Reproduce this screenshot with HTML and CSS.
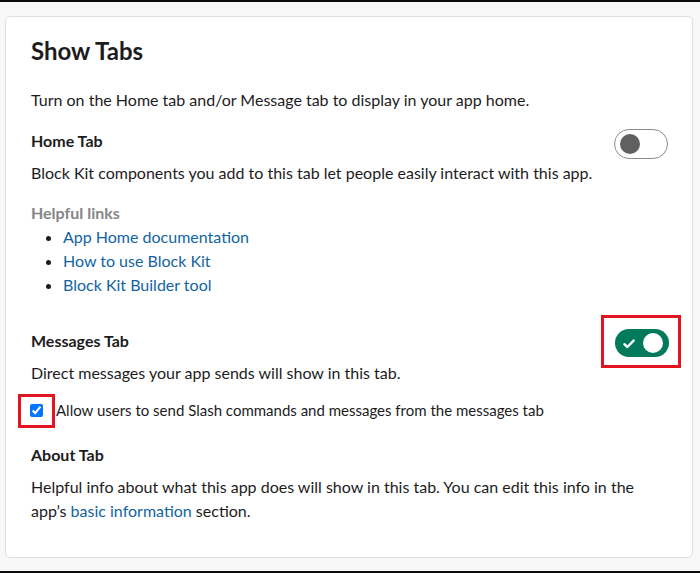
FILE: index.html
```html
<!DOCTYPE html>
<html lang="en">
<head>
<meta charset="utf-8">
<title>Show Tabs</title>
<link rel="stylesheet" href="styles.css">
</head>
<body>
<div class="edge"></div>
<main class="page">
  <section class="card">
    <h1 class="title">Show Tabs</h1>
    <p class="intro">Turn on the Home tab and/or Message tab to display in your app home.</p>

    <div class="section home">
      <div class="section-head">
        <h2 class="section-title">Home Tab</h2>
        <span class="toggle toggle-off"><span class="knob"></span></span>
      </div>
      <p class="desc">Block Kit components you add to this tab let people easily interact with this app.</p>
      <h3 class="links-title">Helpful links</h3>
      <ul class="links">
        <li><a href="#">App Home documentation</a></li>
        <li><a href="#">How to use Block Kit</a></li>
        <li><a href="#">Block Kit Builder tool</a></li>
      </ul>
    </div>

    <div class="section messages">
      <div class="section-head">
        <h2 class="section-title">Messages Tab</h2>
        <span class="toggle toggle-on">
          <svg class="check" width="12" height="10" viewBox="0 0 12 10" aria-hidden="true"><path d="M1.4 5.2 L4.4 8 L10.6 1.6" fill="none" stroke="#fff" stroke-width="2.4" stroke-linecap="round" stroke-linejoin="round"/></svg>
          <span class="knob"></span>
          <span class="mark mark-toggle"></span>
        </span>
      </div>
      <p class="desc">Direct messages your app sends will show in this tab.</p>
      <label class="check-row">
        <span class="check-wrap"><input type="checkbox" checked><span class="mark mark-check"></span></span>
        <span>Allow users to send Slash commands and messages from the messages tab</span>
      </label>
    </div>

    <div class="section about">
      <div class="section-head">
        <h2 class="section-title">About Tab</h2>
      </div>
      <p class="desc">Helpful info about what this app does will show in this tab. You can edit this info in the app’s <a href="#">basic information</a> section.</p>
    </div>
  </section>
</main>
<div class="edge"></div>
</body>
</html>
```

FILE: styles.css
```css
* { box-sizing: border-box; }

html, body {
  margin: 0;
  padding: 0;
}

body {
  width: 700px;
  height: 573px;
  background: #f8f8f8;
  font-family: Lato, "Open Sans", "Liberation Sans", sans-serif;
  font-size: 16px;
  line-height: 24px;
  color: #1d1c1d;
  overflow: hidden;
}

.edge {
  height: 2px;
  background: #0b0b0b;
}

.page {
  padding: 14px 7px 13px 5px;
}

.card {
  background: #fff;
  border: 1px solid #dedede;
  border-radius: 5px;
  padding: 18px 24px 34px 25px;
}

.title {
  margin: 0;
  font-size: 24px;
  line-height: 32px;
  font-weight: 700;
}

.intro {
  margin: 21px 0 0;
}

.section-head {
  display: flex;
  justify-content: space-between;
  align-items: flex-start;
  height: 32px;
}

.section-title {
  margin: 0;
  font-size: 16px;
  line-height: 24px;
  font-weight: 700;
}

.desc {
  margin: 0;
}

.home { margin-top: 17px; }
.messages { margin-top: 32px; }
.about { margin-top: 21px; }

.links-title {
  margin: 16px 0 0;
  font-size: 16px;
  line-height: 24px;
  font-weight: 700;
  color: #868686;
}

.links {
  margin: 0;
  padding-left: 32px;
  list-style: disc;
}

a {
  color: #1264a3;
  text-decoration: none;
}

.toggle {
  position: relative;
  display: flex;
  align-items: center;
  width: 54px;
  border-radius: 15px;
}

.toggle-off {
  height: 30px;
  border: 1px solid #8a8a8a;
  padding: 0 5px;
  background: #fff;
}

.toggle-off .knob {
  width: 20px;
  height: 20px;
  border-radius: 50%;
  background: #616061;
}

.toggle-on {
  height: 28px;
  margin-right: -1px;
  background: #007a5a;
  justify-content: space-between;
  padding: 0 6px 0 8px;
}

.toggle-on .knob {
  width: 20px;
  height: 20px;
  border-radius: 50%;
  background: #fff;
}

.check {
  display: block;
  margin-top: 1px;
}

.check-row {
  display: flex;
  align-items: center;
  gap: 13px;
  margin-top: 13px;
  font-size: 15px;
}

.check-wrap {
  position: relative;
  display: flex;
  margin-left: -1px;
}

.check-wrap input {
  width: 13px;
  height: 13px;
  margin: 0;
  accent-color: #0075ff;
}

.mark {
  position: absolute;
  border: 3px solid #e3141f;
  pointer-events: none;
}

.mark-toggle {
  top: -14px;
  left: -14px;
  right: -12px;
  bottom: -11px;
}

.mark-check {
  top: -10px;
  left: -12px;
  right: -12px;
  bottom: -11px;
}
```
